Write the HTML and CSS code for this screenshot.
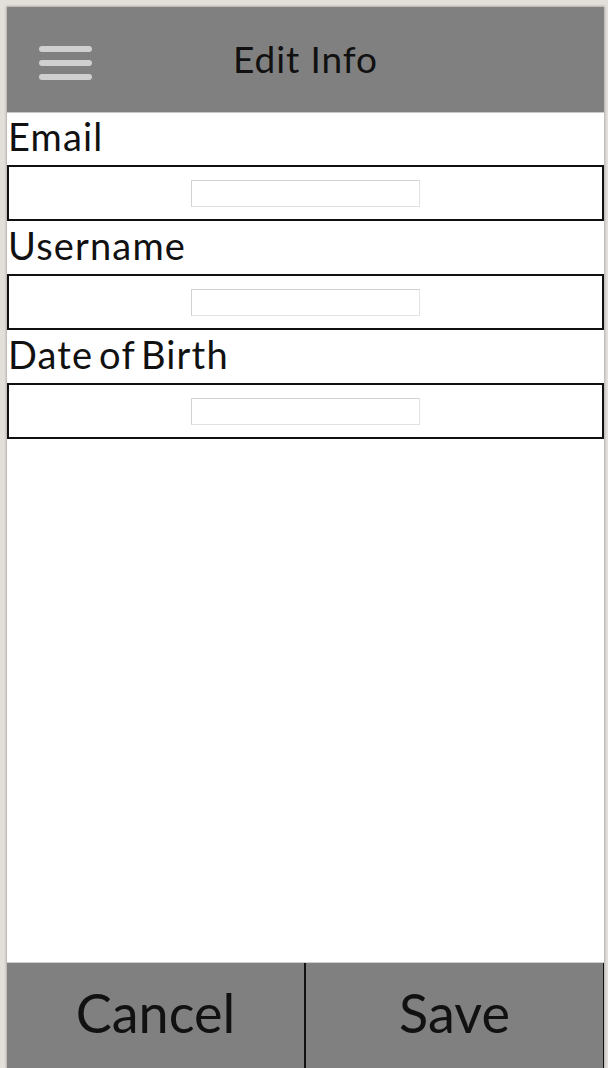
FILE: index.html
```html
<!DOCTYPE html>
<html lang="en">
<head>
<meta charset="utf-8">
<title>Edit Info</title>
<link rel="stylesheet" href="styles.css">
</head>
<body>
<div class="app">
  <header class="topbar">
    <div class="menu" aria-label="Menu">
      <span class="bar"></span>
      <span class="bar"></span>
      <span class="bar"></span>
    </div>
    <h1 class="title">Edit Info</h1>
    <div class="spacer"></div>
  </header>
  <main class="form">
    <label class="label" for="email">Email</label>
    <div class="field"><input class="input" id="email" type="text"></div>
    <label class="label" for="username">Username</label>
    <div class="field"><input class="input" id="username" type="text"></div>
    <label class="label" for="dob">Date of Birth</label>
    <div class="field"><input class="input" id="dob" type="text"></div>
  </main>
  <footer class="actions">
    <button class="action cancel" type="button">Cancel</button>
    <button class="action save" type="button">Save</button>
  </footer>
</div>
</body>
</html>
```
FILE: styles.css
```css
html, body {
  margin: 0;
  padding: 0;
}
body {
  background: #e3dfdb;
  padding: 7px 4px 0 7px;
  font-family: Lato, "Noto Sans", sans-serif;
  color: #111;
  overflow: hidden;
}
.app {
  width: 597px;
  height: 1061px;
  background: #fff;
  display: flex;
  flex-direction: column;
  box-shadow: 0 0 2px 1px rgba(0, 0, 0, 0.22);
}
.topbar {
  height: 105px;
  flex: none;
  background: #808080;
  display: grid;
  grid-template-columns: 1fr auto 1fr;
  align-items: center;
  border-bottom: 1px solid #c8c8c8;
}
.menu {
  display: flex;
  flex-direction: column;
  gap: 8px;
  padding-left: 32px;
  margin-top: 7px;
}
.bar {
  display: block;
  width: 53px;
  height: 6px;
  border-radius: 3px;
  background: #cfcfcf;
}
.title {
  margin: 0;
  font-weight: 400;
  font-size: 37px;
  letter-spacing: 0.9px;
  line-height: 44px;
  color: #111;
  padding-bottom: 2px;
}
.form {
  flex: 1;
  display: flex;
  flex-direction: column;
}
.label {
  display: block;
  height: 52px;
  box-sizing: border-box;
  padding: 1px 0 0 1px;
  font-size: 38px;
  font-weight: 400;
  letter-spacing: 1.15px;
  word-spacing: -5px;
  line-height: 44px;
  color: #111;
}
.label + .field + .label {
  height: 53px;
  padding-top: 2px;
}
.field {
  height: 56px;
  box-sizing: border-box;
  border: 2px solid #111;
  display: flex;
  align-items: center;
  justify-content: center;
}
.input {
  width: 229px;
  height: 27px;
  box-sizing: border-box;
  margin: 0;
  padding: 0;
  border: 1px solid #d2d2d2;
  border-bottom-color: #e2e2e2;
  border-right-color: #e2e2e2;
  background: #fff;
  outline: none;
}
.actions {
  height: 105px;
  flex: none;
  display: flex;
  background: #808080;
  border-top: 1px solid #d0d0d0;
}
.action {
  flex: 1;
  margin: 0;
  padding: 0 0 6px;
  border: none;
  background: #808080;
  font-family: Lato, "Noto Sans", sans-serif;
  font-weight: 400;
  font-size: 54px;
  color: #111;
}
.save {
  border-left: 2px solid #111;
  border-right: 1px solid #111;
}
```
